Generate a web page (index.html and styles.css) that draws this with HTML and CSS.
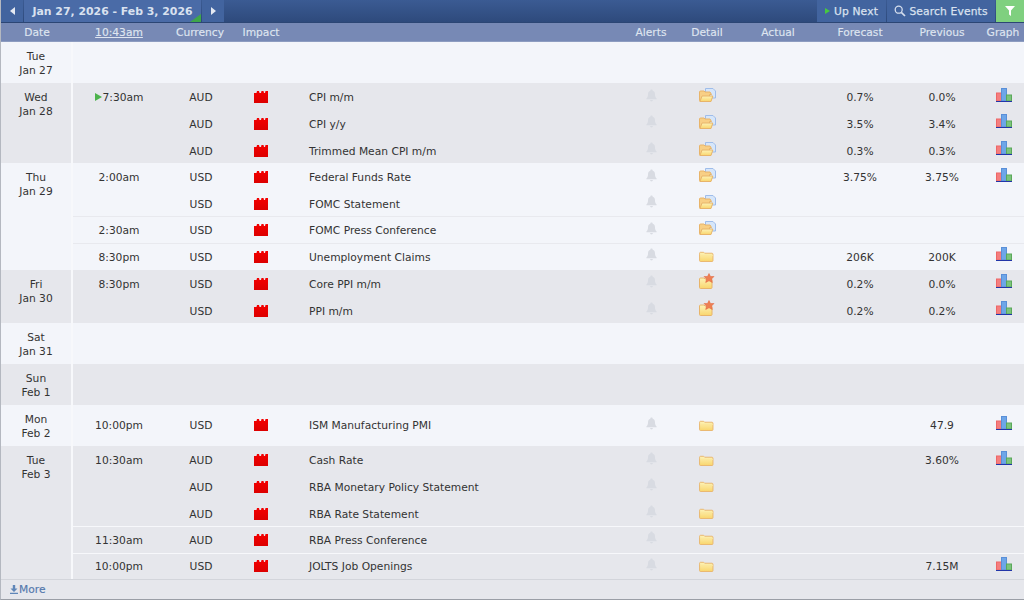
FILE: index.html
```html
<!DOCTYPE html>
<html lang="en">
<head>
<meta charset="utf-8">
<title>Calendar</title>
<link rel="stylesheet" href="styles.css">
</head>
<body>
<svg class="defs" width="0" height="0" aria-hidden="true">
  <defs>
    <linearGradient id="fold" x1="0" y1="0" x2="0" y2="1"><stop offset="0" stop-color="#fdf3b8"/><stop offset="1" stop-color="#f9d56c"/></linearGradient>
    <linearGradient id="redg" x1="0" y1="0" x2="0" y2="1"><stop offset="0" stop-color="#f40000"/><stop offset="1" stop-color="#dc0000"/></linearGradient>
    <symbol id="impact" viewBox="0 0 14 12"><path d="M0 2h2.500l.5-2h2l.5 2h1.500l.5-2h2l.5 2h1l.5-2H14v12H0z" fill="url(#redg)"/></symbol>
    <symbol id="bell" viewBox="0 0 12 14"><path d="M6 0.500c.8 0 1.300.5 1.300 1.200C9 2.300 9.800 3.700 9.800 5.500c0 2.300.6 3.500 1.700 4.500v1H.5v-1c1.100-1 1.700-2.200 1.700-4.500 0-1.800.8-3.200 2.500-3.800C4.700 1 5.200.5 6 .5zM4.500 12h3c0 .9-.6 1.500-1.500 1.500S4.500 12.900 4.500 12z" fill="#d8dbe2"/></symbol>
    <symbol id="folder" viewBox="0 0 16 13"><path d="M.5 4.500V3.500c0-.6.4-1 1-1h3.500l1 1h8c.6 0 1 .4 1 1v7c0 .6-.4 1-1 1h-12.500c-.6 0-1-.4-1-1z" fill="url(#fold)" stroke="#e8b46a"/><path d="M1 6h14" stroke="#fbe69a"/></symbol>
    <symbol id="folderdoc" viewBox="0 0 17 14"><path d="M6.500.5h7.500l2.500 2.500v7h-10z" fill="#d6e6fa" stroke="#9fbdea"/><path d="M.5 5V4c0-.6.4-1 1-1H5l1 1h5l1.500 2.500h-2v7H1.500c-.6 0-1-.4-1-1z" fill="#f8cf85" stroke="#e8b46a"/><path d="M3 8h10.800l-1.800 5.500H1z" fill="url(#fold)" stroke="#e8b46a"/></symbol>
    <symbol id="folderstar" viewBox="0 0 16 16"><path d="M.5 7V6c0-.6.4-1 1-1H5l1 1h6c.6 0 1 .4 1 1v7.500c0 .6-.4 1-1 1H1.500c-.6 0-1-.4-1-1z" fill="url(#fold)" stroke="#e8b46a"/><path d="M10 .5l1.500 3H15l-2.500 2.500.8 3.500L10 7.800 6.700 9.500l.8-3.500L5 3.500h3.500z" fill="#ee7f52" stroke="#e0603a" stroke-width=".5"/></symbol>
    <symbol id="graph" viewBox="0 0 16 14"><rect x="0.500" y="5" width="5" height="8" fill="#f47e7e" stroke="#e66"/><rect x="5.500" y="0.500" width="5" height="12.500" fill="#6ea6e8" stroke="#5a8fd8"/><rect x="10.500" y="7" width="5" height="6" fill="#7cc47c" stroke="#5aa85a"/><path d="M0 13.500h16" stroke="#2235a8"/></symbol>
  </defs>
</svg>

<main class="calendar">
  <div class="toolbar">
    <div class="tool-group">
      <button class="tool nav"><span class="arrow-left"></span></button>
      <button class="tool range">Jan 27, 2026 - Feb 3, 2026<span class="corner"></span></button>
      <button class="tool nav"><span class="arrow-right"></span></button>
    </div>
    <div class="tool-group">
      <button class="tool up-next"><span class="play-small"></span>Up Next</button>
      <button class="tool search">
        <svg class="search-icon" viewBox="0 0 12 12"><circle cx="4.700" cy="4.700" r="3.500" fill="none" stroke="#d5deee" stroke-width="1.300"/><path d="M7.300 7.300L11 11" stroke="#d5deee" stroke-width="1.700"/></svg>
        Search Events</button>
      <button class="tool filter"><svg class="filter-icon" viewBox="0 0 10 10"><path d="M0 0h10L6 4.500V10L4 8.500v-4z" fill="#fff"/></svg></button>
    </div>
  </div>

  <div class="head">
    <span class="h-date">Date</span>
    <span class="c-time now">10:43am</span>
    <span>Currency</span>
    <span>Impact</span>
    <span></span>
    <span>Alerts</span>
    <span>Detail</span>
    <span>Actual</span>
    <span>Forecast</span>
    <span>Previous</span>
    <span>Graph</span>
  </div>

  <section class="day light empty"><div class="date">Tue<br>Jan 27</div><div class="rows"></div></section>

  <section class="day grey">
    <div class="date">Wed<br>Jan 28</div>
    <div class="rows">
      <div class="row"><span><i class="play"></i>7:30am</span><span>AUD</span><svg class="imp"><use href="#impact"/></svg><span class="ev">CPI m/m</span><svg class="bell"><use href="#bell"/></svg><svg class="fd"><use href="#folderdoc"/></svg><span></span><span>0.7%</span><span>0.0%</span><svg class="gr"><use href="#graph"/></svg></div>
      <div class="row"><span></span><span>AUD</span><svg class="imp"><use href="#impact"/></svg><span class="ev">CPI y/y</span><svg class="bell"><use href="#bell"/></svg><svg class="fd"><use href="#folderdoc"/></svg><span></span><span>3.5%</span><span>3.4%</span><svg class="gr"><use href="#graph"/></svg></div>
      <div class="row"><span></span><span>AUD</span><svg class="imp"><use href="#impact"/></svg><span class="ev">Trimmed Mean CPI m/m</span><svg class="bell"><use href="#bell"/></svg><svg class="fd"><use href="#folderdoc"/></svg><span></span><span>0.3%</span><span>0.3%</span><svg class="gr"><use href="#graph"/></svg></div>
    </div>
  </section>

  <section class="day light">
    <div class="date">Thu<br>Jan 29</div>
    <div class="rows">
      <div class="row"><span>2:00am</span><span>USD</span><svg class="imp"><use href="#impact"/></svg><span class="ev">Federal Funds Rate</span><svg class="bell"><use href="#bell"/></svg><svg class="fd"><use href="#folderdoc"/></svg><span></span><span>3.75%</span><span>3.75%</span><svg class="gr"><use href="#graph"/></svg></div>
      <div class="row"><span></span><span>USD</span><svg class="imp"><use href="#impact"/></svg><span class="ev">FOMC Statement</span><svg class="bell"><use href="#bell"/></svg><svg class="fd"><use href="#folderdoc"/></svg></div>
      <div class="row sep"><span>2:30am</span><span>USD</span><svg class="imp"><use href="#impact"/></svg><span class="ev">FOMC Press Conference</span><svg class="bell"><use href="#bell"/></svg><svg class="fd"><use href="#folderdoc"/></svg></div>
      <div class="row sep"><span>8:30pm</span><span>USD</span><svg class="imp"><use href="#impact"/></svg><span class="ev">Unemployment Claims</span><svg class="bell"><use href="#bell"/></svg><svg class="fo"><use href="#folder"/></svg><span></span><span>206K</span><span>200K</span><svg class="gr"><use href="#graph"/></svg></div>
    </div>
  </section>

  <section class="day grey">
    <div class="date">Fri<br>Jan 30</div>
    <div class="rows">
      <div class="row"><span>8:30pm</span><span>USD</span><svg class="imp"><use href="#impact"/></svg><span class="ev">Core PPI m/m</span><svg class="bell"><use href="#bell"/></svg><svg class="fs"><use href="#folderstar"/></svg><span></span><span>0.2%</span><span>0.0%</span><svg class="gr"><use href="#graph"/></svg></div>
      <div class="row"><span></span><span>USD</span><svg class="imp"><use href="#impact"/></svg><span class="ev">PPI m/m</span><svg class="bell"><use href="#bell"/></svg><svg class="fs"><use href="#folderstar"/></svg><span></span><span>0.2%</span><span>0.2%</span><svg class="gr"><use href="#graph"/></svg></div>
    </div>
  </section>

  <section class="day light empty"><div class="date">Sat<br>Jan 31</div><div class="rows"></div></section>
  <section class="day grey empty"><div class="date">Sun<br>Feb 1</div><div class="rows"></div></section>

  <section class="day light empty">
    <div class="date">Mon<br>Feb 2</div>
    <div class="rows">
      <div class="row tall"><span>10:00pm</span><span>USD</span><svg class="imp"><use href="#impact"/></svg><span class="ev">ISM Manufacturing PMI</span><svg class="bell"><use href="#bell"/></svg><svg class="fo"><use href="#folder"/></svg><span></span><span></span><span>47.9</span><svg class="gr"><use href="#graph"/></svg></div>
    </div>
  </section>

  <section class="day grey">
    <div class="date">Tue<br>Feb 3</div>
    <div class="rows">
      <div class="row"><span>10:30am</span><span>AUD</span><svg class="imp"><use href="#impact"/></svg><span class="ev">Cash Rate</span><svg class="bell"><use href="#bell"/></svg><svg class="fo"><use href="#folder"/></svg><span></span><span></span><span>3.60%</span><svg class="gr"><use href="#graph"/></svg></div>
      <div class="row"><span></span><span>AUD</span><svg class="imp"><use href="#impact"/></svg><span class="ev">RBA Monetary Policy Statement</span><svg class="bell"><use href="#bell"/></svg><svg class="fo"><use href="#folder"/></svg></div>
      <div class="row"><span></span><span>AUD</span><svg class="imp"><use href="#impact"/></svg><span class="ev">RBA Rate Statement</span><svg class="bell"><use href="#bell"/></svg><svg class="fo"><use href="#folder"/></svg></div>
      <div class="row sep"><span>11:30am</span><span>AUD</span><svg class="imp"><use href="#impact"/></svg><span class="ev">RBA Press Conference</span><svg class="bell"><use href="#bell"/></svg><svg class="fo"><use href="#folder"/></svg></div>
      <div class="row sep"><span>10:00pm</span><span>USD</span><svg class="imp"><use href="#impact"/></svg><span class="ev">JOLTS Job Openings</span><svg class="bell"><use href="#bell"/></svg><svg class="fo"><use href="#folder"/></svg><span></span><span></span><span>7.15M</span><svg class="gr"><use href="#graph"/></svg></div>
    </div>
  </section>

  <footer class="more">
    <svg class="more-icon" viewBox="0 0 8 9"><path d="M2.800 0h2.400v3.500H7.500L4 7 .5 3.500h2.300zM0 7.800h8V9H0z" fill="#5f86b8"/></svg>More
  </footer>
</main>
</body>
</html>
```

FILE: styles.css
```css
* { box-sizing: border-box; }

html, body {
  margin: 0;
  height: 100%;
  overflow: hidden;
}

body {
  background: #f3f5fa;
  font-family: "DejaVu Sans", Verdana, sans-serif;
  font-size: 10.7px;
  color: #333;
}

.defs { position: absolute; }

.calendar {
  display: flex;
  flex-direction: column;
  height: 600px;
  border-left: 1px solid #b4b8c0;
  border-bottom: 1px solid #9a9ea6;
}

/* toolbar */
.toolbar {
  display: flex;
  justify-content: space-between;
  height: 23px;
  background: linear-gradient(#3b5b93, #2e4a7c);
  border-bottom: 1px solid #2c4674;
}

.tool-group { display: flex; gap: 1px; }

.tool {
  display: flex;
  align-items: center;
  justify-content: center;
  border: 0;
  padding: 0;
  height: 22px;
  background: #42649f;
  color: #d9e1ef;
  font: bold 10.7px "DejaVu Sans", Verdana, sans-serif;
}

.tool.nav { width: 22px; }

.tool.range {
  position: relative;
  width: 177px;
  background: #4a6ba7;
  font-size: 10.9px;
}

.corner {
  position: absolute;
  right: 0;
  bottom: 0;
  border-style: solid;
  border-width: 0 0 8px 11px;
  border-color: transparent transparent #3fa64a transparent;
}

.arrow-left, .arrow-right {
  width: 0;
  height: 0;
  border-style: solid;
  border-color: transparent;
}
.arrow-left { border-width: 4px 5px 4px 0; border-right-color: #e4e9f2; }
.arrow-right { border-width: 4px 0 4px 5px; border-left-color: #e4e9f2; }

.tool.up-next, .tool.search {
  font-weight: normal;
  letter-spacing: 0.15px;
  -webkit-text-stroke: 0.25px #d9e1ef;
}
.tool.up-next { width: 69px; }
.tool.search { width: 108px; }

.play-small {
  width: 0;
  height: 0;
  margin-right: 4px;
  border-style: solid;
  border-width: 3px 0 3px 5px;
  border-color: transparent transparent transparent #46c93f;
}

.search-icon { width: 12px; height: 12px; margin-right: 3px; }

.tool.filter { width: 28px; background: #7fd07f; }
.filter-icon { width: 10px; height: 10px; }

/* column header + rows share the column widths */
.head {
  display: grid;
  grid-template-columns: 72px 92px 70px 52px 339px 50px 62px 80px 84px 80px 42px;
  align-items: center;
  height: 19px;
  flex: none;
  background: #7789b5;
  color: #dfe5f0;
  text-align: center;
  border-bottom: 1px solid #8d9cc0;
  -webkit-text-stroke: 0.15px #dfe5f0;
}

.now { text-decoration: underline; }

.day {
  display: flex;
  flex: none;
}
.day.light { background: #f3f5fa; }
.day.grey { background: #e6e7ec; }
.day.empty { height: 41px; }

.date {
  width: 72px;
  flex: none;
  padding-top: 8px;
  line-height: 14.300px;
  text-align: center;
  border-right: 2px solid #f7f8fb;
}

.rows { flex: 1; min-width: 0; }

.row {
  display: grid;
  grid-template-columns: 92px 70px 52px 339px 50px 62px 80px 84px 80px 42px;
  height: 26.660px;
  align-items: center;
  justify-items: center;
  text-align: center;
  padding-top: 3px;
}
.row.sep { border-top: 1px solid #e8e9ee; padding-top: 1px; }
.day.grey .row.sep { border-top-color: #f7f8fb; }
.row.tall { height: 41px; padding-top: 1px; }

.row > span:nth-child(2) { padding-left: 2px; }
.row .ev { justify-self: start; padding-left: 22px; }

.play {
  display: inline-block;
  width: 0;
  height: 0;
  margin-right: 1px;
  border-style: solid;
  border-width: 4px 0 4px 7px;
  border-color: transparent transparent transparent #4db34d;
}

.imp { width: 14px; height: 12px; margin-top: -1px; }
.bell { width: 11px; height: 13px; margin-top: -5px; }
.fd { width: 17px; height: 14px; margin-top: -5px; }
.fo { width: 15px; height: 12px; margin-left: -1px; margin-top: -2px; }
.fs { width: 16px; height: 16px; margin-top: -7px; }
.gr { width: 16px; height: 14px; margin-top: -6px; margin-left: 2px; }

.more {
  flex: 1;
  display: flex;
  align-items: center;
  gap: 1px;
  padding-left: 9px;
  background: #e6e7ec;
  border-top: 1px solid #d3d5db;
  color: #5579ad;
  -webkit-text-stroke: 0.15px #5579ad;
}
.more-icon { width: 8px; height: 9px; }
```
